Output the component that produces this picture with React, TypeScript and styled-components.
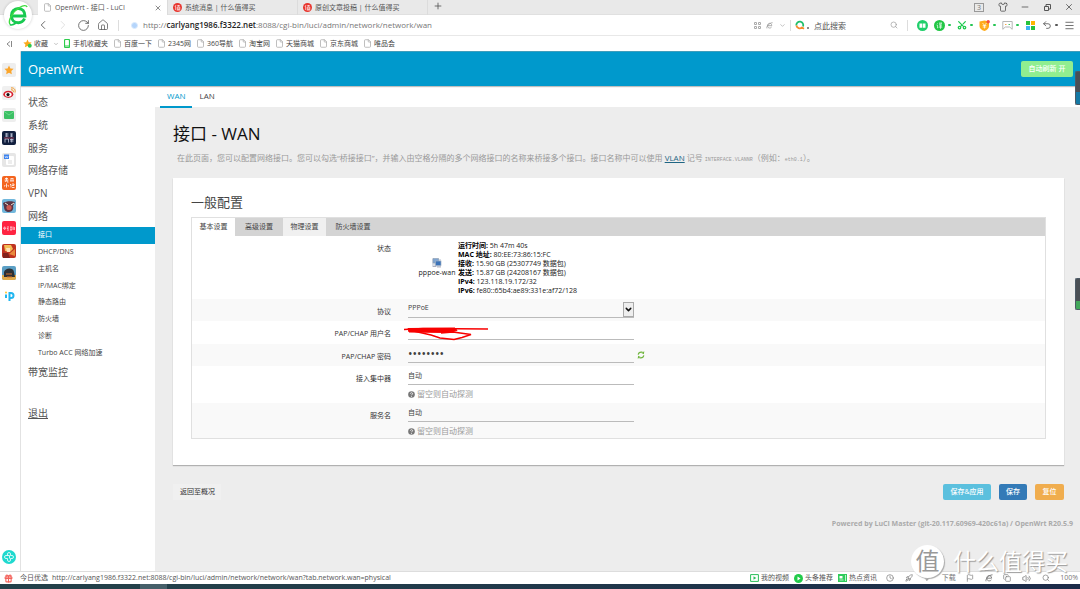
import React from 'react';
import styled, { createGlobalStyle } from 'styled-components';
import {
  ArrowDown, ChevronDown, ChevronLeft, ChevronRight, Clock, Copy, File, Flag, Gift, Home, Menu, Minus,
  Plus, Rocket, RotateCw, Scissors, Search, Shirt, Undo2, Volume2, X,
} from 'lucide-react';

const latin = '"Open Sans", "Noto Sans"';
const cjk = '"Noto Sans CJK SC", sans-serif';

const GlobalStyle = createGlobalStyle`
  * { box-sizing: border-box; }
  body {
    margin: 0;
    background: #ededed;
    color: #404040;
    font-family: ${latin}, ${cjk};
    font-size: 7px;
    line-height: 10px;
    overflow: hidden;
  }
  button, input, select { font: inherit; color: inherit; margin: 0; padding: 0; border: 0; background: none; border-radius: 0; outline: 0; }
  svg { display: block; flex: none; }
  a { color: inherit; text-decoration: none; }
`;

const Page = styled.div`
  position: relative;
  display: flex;
  flex-direction: column;
  min-height: 100vh;
`;

/* ---------- browser chrome ---------- */

const TabStrip = styled.div`
  display: flex;
  height: 15px;
  padding-left: 38px;
  background: #e9e9e9;
  border-bottom: 1px solid #e0e0e0;
`;

const BrowserTab = styled.div<{ $active?: boolean }>`
  display: flex;
  align-items: center;
  gap: 3px;
  flex: 0 0 130px;
  height: 15px;
  padding: 0 5px;
  color: #555;
  background: ${p => (p.$active ? '#fff' : 'transparent')};
  border-right: 1px solid #dcdcdc;
  white-space: nowrap;
`;

const IconButton = styled.button<{ $color?: string; $w?: number }>`
  display: flex;
  align-items: center;
  justify-content: center;
  flex: none;
  width: ${p => p.$w ?? 20}px;
  height: 12px;
  color: ${p => p.$color ?? '#555'};
`;

const Push = styled.div`
  margin-left: auto;
  display: flex;
  align-items: center;
`;

const CountBadge = styled.span`
  width: 10px;
  height: 9px;
  margin-right: 8px;
  border: 1px solid #999;
  color: #777;
  font-size: 7px;
  line-height: 7px;
  text-align: center;
`;

const Toolbar = styled.div`
  display: flex;
  align-items: center;
  height: 21px;
  background: #fff;
  border-bottom: 1px solid #e8e8e8;
`;

const NavButtons = styled.div`
  display: flex;
  padding: 0 5px 0 33px;
`;

const Divider = styled.span`
  width: 1px;
  height: 11px;
  background: #ddd;
`;

const SiteDot = styled.span`
  width: 7px;
  height: 7px;
  margin: 0 5px 0 12px;
  border-radius: 50%;
  background: #b5d5fb;
  border: 1px solid #dcebfd;
`;

const Address = styled.div`
  flex: 1;
  color: #777;
  font-size: 8px;
  white-space: nowrap;
  b { color: #222; font-weight: 600; }
`;

const SearchBox = styled.label`
  display: flex;
  align-items: center;
  width: 116px;
  padding: 0 9px 0 4px;
  gap: 4px;
  color: #999;
  input { flex: 1; min-width: 0; font-size: 8px; height: 12px; color: #555; }
  input::placeholder { color: #555; opacity: 1; }
`;

const ToolIcons = styled.div`
  display: flex;
  align-items: center;
  justify-content: space-between;
  width: 172px;
  padding: 0 5px 0 9px;
`;

const ToolButton = styled.button<{ $color?: string }>`
  display: flex;
  align-items: center;
  gap: 3px;
  height: 12px;
  color: ${p => p.$color ?? '#555'};
`;

const Tick = styled.span`
  width: 3px;
  height: 2px;
  border-radius: 1px;
  background: currentColor;
`;

const Bookmarks = styled.nav`
  display: flex;
  align-items: center;
  gap: 5px;
  height: 15px;
  padding-left: 6px;
  background: #fff;
  color: #444;
`;

const Bookmark = styled.a<{ $gap?: number }>`
  display: flex;
  align-items: center;
  gap: ${p => p.$gap ?? 3}px;
  white-space: nowrap;
`;

const LogoBubble = styled.div`
  position: absolute;
  left: 4px;
  top: 1px;
  width: 28px;
  height: 28px;
  border-radius: 50%;
  background: #fff;
  box-shadow: 0 0 3px rgba(0, 0, 0, 0.2);
`;

/* ---------- window body ---------- */

const Window = styled.div`
  display: flex;
  flex: 1;
`;

const AppRail = styled.aside`
  display: flex;
  flex-direction: column;
  justify-content: space-between;
  align-items: center;
  flex: 0 0 21px;
  padding: 12px 2px 7px 0;
  background: #fff;
  border-right: 1px solid #e2e2e2;
`;

const RailList = styled.div`
  display: flex;
  flex-direction: column;
  justify-content: space-between;
  height: 240px;
`;

const RouterPage = styled.div`
  flex: 1;
  min-width: 0;
  display: flex;
  flex-direction: column;
`;

const Header = styled.header`
  display: flex;
  align-items: center;
  justify-content: space-between;
  height: 35px;
  padding: 0 7px;
  background: #0099cc;
  border-top: 1px solid #3f9dbb;
  box-shadow: 0 1px 1px rgba(0, 0, 0, 0.25);
  z-index: 1;
`;

const Brand = styled.a`
  color: #fff;
  font-size: 13px;
  line-height: 18px;
  padding-bottom: 1px;
`;

const ActionButton = styled.button<{ $bg: string; $w: number }>`
  width: ${p => p.$w}px;
  height: 16px;
  border-radius: 2px;
  background: ${p => p.$bg};
  color: #fff;
  font-weight: 500;
  line-height: 16px;
  text-align: center;
  white-space: nowrap;
`;

const Columns = styled.div`
  display: flex;
  flex: 1;
`;

const SideMenu = styled.nav`
  flex: 0 0 134px;
  padding-top: 5px;
  background: #fff;
`;

const MenuGroup = styled.div`
  display: grid;
  grid-template-rows: repeat(6, 1fr);
  height: 136px;
`;

const SubMenu = styled.div`
  display: grid;
  grid-template-rows: repeat(8, 1fr);
  height: 134px;
`;

const MenuLink = styled.a<{ $underline?: boolean }>`
  display: flex;
  align-items: center;
  min-height: 22px;
  padding-left: 7px;
  color: #555;
  font-size: 10px;
  line-height: 14px;
  margin-top: ${p => (p.$underline ? 19 : 0)}px;
  text-decoration: ${p => (p.$underline ? 'underline' : 'none')};
`;

const SubLink = styled.a<{ $active?: boolean }>`
  display: flex;
  align-items: center;
  padding-left: 17px;
  color: ${p => (p.$active ? '#fff' : '#444')};
  background: ${p => (p.$active ? '#0099cc' : 'transparent')};
`;

const Main = styled.main`
  flex: 1;
  min-width: 0;
`;

const PageTabs = styled.nav`
  display: flex;
  height: 22px;
  padding-left: 5px;
  background: linear-gradient(#fff 21px, #ededed 21px);
`;

const PageTab = styled.a<{ $active?: boolean }>`
  padding: 0 7px;
  font-size: 8px;
  line-height: 20px;
  color: ${p => (p.$active ? '#0099cc' : '#444')};
  border-bottom: 2px solid ${p => (p.$active ? '#0099cc' : 'transparent')};
`;

const Content = styled.div`
  padding: 15px 16px 0 18px;
`;

const Title = styled.h1`
  margin: 0;
  color: #111;
  font-size: 17px;
  font-weight: 400;
  line-height: 22px;
`;

const Description = styled.p`
  margin: 8px 0 0 4px;
  color: #999;
  font-size: 8px;
  line-height: 10px;
  white-space: nowrap;
  a { color: #1f6583; text-decoration: underline; }
  code { font-family: "Liberation Mono", monospace; font-size: 5px; }
`;

const Card = styled.section`
  margin-top: 13px;
  padding: 14px 18px 26px;
  background: #fff;
  box-shadow: 0 1px 1px rgba(0, 0, 0, 0.25);
`;

const CardTitle = styled.h2`
  margin: 0 0 5px;
  font-size: 13px;
  font-weight: 400;
  line-height: 20px;
  color: #444;
`;

const ConfigBox = styled.form`
  border: 1px solid #e0e0e0;
`;

const ConfigTabs = styled.div`
  display: flex;
  height: 18px;
  background: #d4d4d4;
`;

const ConfigTab = styled.button<{ $w: number; $bg?: string }>`
  width: ${p => p.$w}px;
  background: ${p => p.$bg ?? 'transparent'};
  color: #444;
`;

const Row = styled.div<{ $h: number; $shade?: boolean }>`
  display: grid;
  grid-template-columns: 199px 226px 1fr;
  column-gap: 17px;
  height: ${p => p.$h}px;
  background: ${p => (p.$shade ? '#f9f9f9' : '#fff')};
`;

const FieldLabel = styled.label`
  padding-top: 8px;
  text-align: right;
  color: #333;
`;

const Field = styled.div`
  position: relative;
`;

const TextInput = styled.input<{ $size?: number }>`
  display: block;
  width: 100%;
  height: 19px;
  border-bottom: 1px solid #bbb;
  font-size: ${p => p.$size ?? 7}px;
`;

const Select = styled.select`
  display: block;
  width: 100%;
  height: 19px;
  border-bottom: 1px solid #bbb;
  appearance: none;
`;

const SelectArrow = styled.span`
  position: absolute;
  right: 0;
  top: 3px;
  display: flex;
  align-items: center;
  justify-content: center;
  width: 11px;
  height: 15px;
  border: 1px solid #aaa;
  background: #eee;
  color: #111;
  pointer-events: none;
`;

const Hint = styled.div`
  display: flex;
  align-items: center;
  gap: 2px;
  margin-top: 4px;
  color: #999;
  font-size: 8px;
`;

const StatusBlock = styled.div`
  display: flex;
  align-items: center;
  gap: 3px;
  padding-left: 11px;
  color: #222;
  white-space: nowrap;
`;

const Iface = styled.div`
  display: flex;
  flex-direction: column;
  align-items: center;
  width: 36px;
`;

const StatusLines = styled.div`
  line-height: 9px;
  b { color: #000; }
`;

const RefreshCell = styled.button`
  display: flex;
  align-items: center;
  margin-left: -14px;
`;

const Actions = styled.div`
  display: flex;
  gap: 8px;
  margin-top: 19px;
`;

const BackButton = styled.button`
  margin-right: auto;
  padding: 0 6px 0 7px;
  height: 16px;
  background: #f0f0f0;
  color: #333;
`;

const Powered = styled.footer`
  margin-top: 19px;
  padding-right: 7px;
  color: #aaa;
  font-weight: 700;
  text-align: right;
`;

/* ---------- status bar, overlays ---------- */

const StatusBar = styled.div`
  display: flex;
  align-items: center;
  height: 13px;
  padding: 0 2px 0 4px;
  background: #fff;
  border-top: 1px solid #ddd;
  color: #555;
  white-space: nowrap;
`;

const StatusText = styled.span`
  margin-left: 7px;
  & + & { margin-left: 4px; }
`;

const StatusLink = styled.a`
  display: flex;
  align-items: center;
  gap: 2px;
  margin-right: 5px;
`;

const StatusIcons = styled.div`
  display: flex;
  align-items: center;
  justify-content: space-between;
  width: 192px;
  margin-left: 4px;
  color: #777;
`;

const Taskbar = styled.div`
  height: 5px;
  background: linear-gradient(90deg, #23404a 0 140px, #465f69 140px 167px, #23404a 167px, #1c2b49);
`;

const EdgeHandle = styled.div<{ $top: number; $h: number; $fill: string; $tip: number }>`
  position: absolute;
  right: 0;
  top: ${p => p.$top}px;
  width: 5px;
  height: ${p => p.$h}px;
  border: 1px solid #4d5a66;
  border-right: 0;
  border-radius: 2px 0 0 2px;
  background: linear-gradient(#4a4f55 ${p => p.$h - p.$tip}px, ${p => p.$fill} 0);
  z-index: 2;
`;

const Watermark = styled.div`
  position: absolute;
  right: 12px;
  bottom: 11px;
  display: flex;
  align-items: center;
  gap: 9px;
  color: #fff;
  font-size: 23px;
  line-height: 34px;
  text-shadow: 1px 1px 1px #999;
  pointer-events: none;
`;

const Seal = styled.span`
  width: 33px;
  height: 33px;
  border-radius: 50%;
  background: #fff;
  color: #999;
  font-size: 24px;
  line-height: 32px;
  text-align: center;
  text-shadow: none;
  box-shadow: 1px 1px 1px #aaa;
`;

/* ---------- drawings ---------- */

const ELogo = () => (
  <svg width="28" height="28" viewBox="0 0 28 28" fill="none">
    <path d="M20.5 17.500c-1 2.500-3.400 4.200-6.300 4.200-4 0-6.800-2.900-6.800-7s2.900-7.200 7-7.200c3.900 0 6.500 2.900 6.500 7.500H9" stroke="#17c950" strokeWidth="3" />
    <path d="M6 23.500C3.800 20 8 11 15.500 6.500c4-2.400 7-2.500 7.600-.5" stroke="#3fdc3f" strokeWidth="1.400" />
    <path d="M6 23.500c1.400 1 4-.1 6-1.500" stroke="#17c950" strokeWidth="1.600" />
  </svg>
);

const SmzdmIcon = () => (
  <svg width="9" height="9" viewBox="0 0 9 9">
    <circle cx="4.500" cy="4.500" r="4.500" fill="#e8352e" />
    <path d="M3 2 2 4M2.600 3.500V7M4 2.700h3M5.500 2v1.500M4.200 4h2.600v2.500H4.200zM4.200 5.200h2.600M3.700 7.100h3.600" stroke="#fff" strokeWidth=".6" fill="none" />
  </svg>
);

const FileIcon = () => <File size={9} color="#aaa" strokeWidth={2} />;

const StarIcon = ({ dot }: { dot?: boolean }) => (
  <svg width="9" height="9" viewBox="0 0 10 10">
    <path d="M5 .6 6.400 3.500l3.200.4-2.300 2.200.6 3.200L5 7.700 2.100 9.300l.6-3.200L.4 3.900l3.200-.4z" fill="#fba919" />
    {dot && <circle cx="7.500" cy="7.600" r="2.200" fill="#2fc84f" />}
  </svg>
);

const railIcons: React.ReactNode[] = [
  <g key="star"><rect width="14" height="14" rx="2" fill="#eee" /><path d="M7 2.500 8.400 5.400l3.200.4-2.300 2.200.5 3.200L7 9.700l-2.800 1.500.5-3.200-2.300-2.200 3.200-.4z" fill="#fba52a" /></g>,
  <g key="weibo"><rect width="14" height="14" rx="2" fill="#f0f0f0" /><ellipse cx="6.300" cy="8.300" rx="5" ry="3.600" fill="#d8232f" /><ellipse cx="6.300" cy="8.500" rx="3.300" ry="2.200" fill="#fff" /><circle cx="6" cy="8.600" r="1.600" fill="#111" /><path d="M9 3.800c1.700-.3 2.700.8 2.300 2.400M9 1.900c3-.4 4.800 1.800 4 4.600" stroke="#f29a2b" fill="none" /></g>,
  <g key="mail"><rect width="14" height="14" rx="2" fill="#eee" /><rect x="2" y="3" width="10" height="8" rx="1" fill="#3cc065" /><path d="m2 3.500 5 3.500 5-3.500" stroke="#7fe09b" strokeWidth=".7" fill="none" /></g>,
  <g key="game"><rect width="14" height="14" rx="2" fill="#12203f" /><path d="M3 3h3.500M3 5h3.500M4.700 2v4M8 3h3M8 5h3M9.500 2.500V6M3 8v3.500M3 8h3.500v3.500M8 8.500h3.500M8 10h3.500M9.700 7.500v4" stroke="#c3c8dc" strokeWidth=".8" fill="none" /><path d="M2 7h10" stroke="#d2455c" strokeWidth=".7" /></g>,
  <g key="doc"><rect width="14" height="14" rx="2" fill="#e6e6e6" /><rect x="4" y="3" width="8" height="9" rx="1" fill="#fff" /><path d="M6 8h4M6 10h4" stroke="#ccc" strokeWidth=".7" /><rect x="2" y="1.500" width="5" height="4.500" fill="#3d83ee" /><path d="m3 3 .7 2 .8-1.600.8 1.600L6 3" stroke="#fff" strokeWidth=".5" fill="none" /></g>,
  <g key="novel"><rect width="14" height="14" rx="2" fill="#f4641e" /><path d="M3 2.500h3M2.500 4h4M4.500 1.500V4L3 6M5 4v2h1.500M8.500 2.500h3M8 4h4M9 4v2M11 4v2M4.500 7.500v4M3 9 2.500 10.500M6 9l.5 1.500M8 8.500h1v3M10 8h2v1.500h-2M10 11.500h2.500" stroke="#fff" strokeWidth=".8" fill="none" /></g>,
  <g key="pirate"><rect width="14" height="14" rx="2" fill="#71b7dc" /><path d="M1 4c3-2 9-2 12-1L11 7c1 3-1 6-4 6s-5-2-5-5z" fill="#5b3444" /><circle cx="7" cy="8.500" r="2.600" fill="#cf5850" /><path d="m3 4 3 2M12 4 9 6" stroke="#efe6d8" /></g>,
  <g key="red"><rect width="14" height="14" rx="2" fill="#ff2442" /><path d="M2.700 5.500V9M1.700 6.500v1.500M3.700 6.500v1.500M5 6h2M5 7.500h1.500M5 9h2M8 6h2M9 6v3M8 9h2M11 5.500V9M12.300 6v3" stroke="#fff" strokeWidth=".7" /></g>,
  <g key="king"><rect width="14" height="14" rx="2" fill="#bf3320" /><path d="M2 1h7l2 4-3 3-5-1z" fill="#f3bd55" /><path d="M4 4h4v4H5z" fill="#ffe1b5" /><path d="m7 10 6-5v7z" fill="#e98a3d" /><path d="M1 9h5l2 5H1z" fill="#80221b" /></g>,
  <g key="tank"><rect width="14" height="14" rx="2" fill="#5b9fc5" /><path d="M0 9h14v3a2 2 0 0 1-2 2H2a2 2 0 0 1-2-2z" fill="#dfaa4a" /><path d="M2 6c1-4 9-5 10 0l1 5H2z" fill="#2c3034" /><path d="M4 8h6M5 11h5" stroke="#d26e2e" /></g>,
  <g key="pp"><path d="M4 5.500V9" stroke="#21b6f0" strokeWidth="2" /><circle cx="4" cy="3.500" r="1" fill="#ffc52e" /><path d="M7.500 12V4H9a2.500 2.500 0 0 1 0 5H7.500" stroke="#21b6f0" strokeWidth="2" fill="none" /></g>,
];

const OrbIcon = () => (
  <svg width="14" height="14" viewBox="0 0 14 14">
    <circle cx="7" cy="7" r="7" fill="#1fd9cf" />
    <path d="M5.500 5.500V4a1.500 1.500 0 0 1 3 0v1.500H10a1.500 1.500 0 0 1 0 3H8.500V10a1.500 1.500 0 0 1-3 0V8.500H4a1.500 1.500 0 0 1 0-3h3.500v3" stroke="#fff" strokeWidth=".8" fill="none" />
  </svg>
);

const IfaceIcon = () => (
  <svg width="10" height="10" viewBox="0 0 10 10">
    <path d="M0 1h9v8H0z" fill="#d9dee6" />
    <rect x="1" y=".5" width="5.500" height="4.500" fill="#7fa5d2" stroke="#8b9bb0" strokeWidth=".6" />
    <rect x="3.500" y="3" width="5.500" height="4.500" fill="#3c73b8" stroke="#9fb0c4" strokeWidth=".7" />
    <path d="M1 8.500h3M5 9h4" stroke="#99a" strokeWidth=".7" />
  </svg>
);

const ReloadIcon = () => (
  <svg width="8" height="8" viewBox="0 0 8 8" fill="none" stroke="#72b640" strokeWidth="1.200">
    <path d="M1.200 3.600C1.500 2 2.800 1.200 4.200 1.200h1.300M6.800 4.400C6.500 6 5.200 6.800 3.800 6.800H2.500" />
    <path d="M7.300.2 6.900 3.300 4.300 2.100zM.7 7.800l.4-3.100 2.600 1.200z" fill="#72b640" stroke="none" />
  </svg>
);

const HelpIcon = () => (
  <svg width="7" height="7" viewBox="0 0 7 7">
    <circle cx="3.500" cy="3.500" r="3.300" fill="#777" />
    <path d="M2.400 2.700c.1-1.400 2.300-1.300 2.200 0 0 .8-1.100.8-1.100 1.600M3.500 5v.8" stroke="#fff" strokeWidth=".8" fill="none" />
  </svg>
);

const IeIcon = ({ size = 7 }: { size?: number }) => (
  <svg width={size} height={size} viewBox="0 0 8 8" fill="none" stroke="currentColor" strokeWidth=".9">
    <path d="M1.700 4.200h4.900C6.600 2.500 5.500 1.500 4.200 1.500S1.700 2.600 1.700 4.200s1.100 2.700 2.500 2.700c1 0 1.700-.4 2.200-1.100M1 7.300C.2 5.500 3.500 1 7.500.8" />
  </svg>
);

const RestoreIcon = () => (
  <svg width="7" height="7" viewBox="0 0 7 7" fill="none" stroke="currentColor"><path d="M.5 2.500h4v4h-4zM2 2V.5h4.500V5H5" /></svg>
);

const tools: { color?: string; tick?: boolean; art: React.ReactNode }[] = [
  { art: <g><circle cx="5.500" cy="5.500" r="5.500" fill="#20cf6b" /><path d="M2.500 3.500h2.700v4.300H2.500zM5.800 3.500h2.700v4.300H5.800z" fill="#fff" /></g> },
  { color: '#23c552', tick: true, art: <g><circle cx="5.500" cy="5.500" r="5.500" fill="#22c746" /><path d="M3 3l.6.7M2.500 5h1v3l.8-.6M5 3h3L5 5M5.300 3.500 8 5.200M5 6h3M4.800 7.200h3.500M6.500 5v4" stroke="#fff" strokeWidth=".6" fill="none" /></g> },
  { color: '#23c552', tick: true, art: <Scissors size={10} color="#1fcb50" strokeWidth={3} style={{ transform: 'rotate(-90deg)' }} /> },
  { color: '#23c552', tick: true, art: <g><path d="M.5 1.500 5.500.5l4.500 1v4.500c0 2.500-2 4-4.500 5-3-1-5-2.500-5-5z" fill="#ffab19" /><path d="M3.500 3l2 2.300 2-2.300M5.500 5.300V8.500M3.700 5.500h3.600M3.700 7h3.600" stroke="#fff" strokeWidth=".7" fill="none" /><circle cx="9.200" cy="1.800" r="1.700" fill="#f5503e" /></g> },
  { color: '#23c552', tick: true, art: <g fill="none" stroke="#b5b5b5"><path d="M.8 1.500h9.400v7.800L7.700 7H3.300L.8 9.300z" /><path d="M3 4.500h1.500" stroke="#f7a84c" /><path d="M6.500 4.500H8" stroke="#43c66a" /></g> },
  { art: <g><path d="M1 1h4v4H1z" fill="#27c23c" /><path d="M6 1h4v4H6z" fill="#ffb400" /><path d="M1 6h4v4H1z" fill="#3db4f2" /><path d="M6 6h4v4H6z" fill="#27c23c" /></g> },
];

/* ---------- data ---------- */

const bookmarks = ['百度一下', '2345网', '360导航', '淘宝网', '天猫商城', '京东商城', '唯品会'];
const menu = ['状态', '系统', '服务', '网络存储', 'VPN', '网络'];
const subMenu = ['接口', 'DHCP/DNS', '主机名', 'IP/MAC绑定', '静态路由', '防火墙', '诊断', 'Turbo ACC 网络加速'];
const status = [
  ['运行时间', '5h 47m 40s'],
  ['MAC 地址', '80:EE:73:86:15:FC'],
  ['接收', '15.90 GB (25307749 数据包)'],
  ['发送', '15.87 GB (24208167 数据包)'],
  ['IPv4', '123.118.19.172/32'],
  ['IPv6', 'fe80::65b4:ae89:331e:af72/128'],
];

const Scribble = styled.svg`
  position: absolute;
  left: -5px;
  top: 6px;
`;

export default function App() {
  return (
    <Page>
      <GlobalStyle />
      <TabStrip>
        <BrowserTab $active>
          <FileIcon />OpenWrt - 接口 - LuCI
          <Push><X size={8} /></Push>
        </BrowserTab>
        <BrowserTab><SmzdmIcon />系统消息 | 什么值得买</BrowserTab>
        <BrowserTab><SmzdmIcon />原创文章投稿 | 什么值得买</BrowserTab>
        <IconButton aria-label="新标签"><Plus size={10} /></IconButton>
        <Push>
          <CountBadge>3</CountBadge>
          <IconButton $w={22} aria-label="皮肤"><Shirt size={10} /></IconButton>
          <IconButton $w={22} aria-label="最小化"><Minus size={10} /></IconButton>
          <IconButton $w={22} aria-label="还原"><RestoreIcon /></IconButton>
          <IconButton $w={22} aria-label="关闭"><X size={10} /></IconButton>
        </Push>
      </TabStrip>
      <Toolbar>
        <NavButtons>
          <IconButton aria-label="后退"><ChevronLeft size={14} strokeWidth={1.500} /></IconButton>
          <IconButton $color="#ddd" aria-label="前进"><ChevronRight size={14} strokeWidth={1.500} /></IconButton>
          <IconButton aria-label="刷新"><RotateCw size={13} strokeWidth={1.500} /></IconButton>
          <IconButton aria-label="主页"><Home size={12} strokeWidth={1.500} /></IconButton>
        </NavButtons>
        <Divider />
        <SiteDot />
        <Address>http://<b>carlyang1986.f3322.net</b>:8088/cgi-bin/luci/admin/network/network/wan</Address>
        <IconButton $w={12} $color="#aaa" aria-label="二维码">
          <svg width="7" height="7" viewBox="0 0 7 7" fill="none" stroke="currentColor"><path d="M.5.500h2v2h-2zM4.500.500h2v2h-2zM.5 4.500h2v2h-2zM4.500 4.500h2v2h-2z" /></svg>
        </IconButton>
        <IconButton $w={12} $color="#999" aria-label="内核"><IeIcon /></IconButton>
        <IconButton $w={15} $color="#999" aria-label="更多"><ChevronDown size={7} /></IconButton>
        <Divider />
        <SearchBox>
          <svg width="15" height="10" viewBox="0 0 15 10" fill="none" strokeWidth="1.800">
            <path d="M1.300 5.500A3.500 3.500 0 1 1 8 6.500" stroke="#20bf6b" /><path d="M1.400 5.500A3.500 3.500 0 0 0 7 7.500l2 1.300" stroke="#f68b2c" /><path d="M12 8h2" stroke="#666" strokeWidth="1.500" />
          </svg>
          <input aria-label="搜索" placeholder="点此搜索" />
          <Search size={8} />
        </SearchBox>
        <Divider />
        <ToolIcons>
          {tools.map((t, i) => (
            <ToolButton key={i} $color={t.color} aria-label={`工具 ${i + 1}`}>
              {i === 2 ? t.art : <svg width="11" height="11" viewBox="0 0 11 11">{t.art}</svg>}
              {t.tick && <Tick />}
            </ToolButton>
          ))}
          <ToolButton aria-label="撤销"><Undo2 size={10} /><Tick /></ToolButton>
          <ToolButton aria-label="菜单"><Menu size={11} strokeWidth={1.800} /></ToolButton>
        </ToolIcons>
      </Toolbar>
      <Bookmarks>
        <svg width="12" height="8" viewBox="0 0 12 8" fill="none" stroke="#888"><path d="M4 1.500 1 4l3 2.500M5.500 1v6" /></svg>
        <Bookmark href="#" $gap={2}><StarIcon dot />收藏</Bookmark>
        <ChevronDown size={6} color="#888" />
        <Bookmark href="#" $gap={3}>
          <svg width="6" height="9" viewBox="0 0 6 9" fill="none" stroke="#2dcc4c"><rect x=".5" y=".5" width="5" height="8" rx="1" strokeWidth="1.200" /><path d="M1 7h4" /></svg>
          手机收藏夹
        </Bookmark>
        {bookmarks.map(b => <Bookmark key={b} href="#" $gap={2}><FileIcon />{b}</Bookmark>)}
      </Bookmarks>
      <LogoBubble><ELogo /></LogoBubble>

      <Window>
        <AppRail>
          <RailList>
            {railIcons.map((art, i) => <svg key={i} width="14" height="14" viewBox="0 0 14 14">{art}</svg>)}
          </RailList>
          <OrbIcon />
        </AppRail>
        <RouterPage>
          <Header>
            <Brand href="#">OpenWrt</Brand>
            <ActionButton $bg="#90ee90" $w={52}>自动刷新 开</ActionButton>
          </Header>
          <Columns>
            <SideMenu>
              <MenuGroup>{menu.map(m => <MenuLink key={m} href="#">{m}</MenuLink>)}</MenuGroup>
              <SubMenu>{subMenu.map((m, i) => <SubLink key={m} href="#" $active={i === 0}>{m}</SubLink>)}</SubMenu>
              <MenuLink href="#">带宽监控</MenuLink>
              <MenuLink href="#" $underline>退出</MenuLink>
            </SideMenu>
            <Main>
              <PageTabs>
                <PageTab href="#" $active>WAN</PageTab>
                <PageTab href="#">LAN</PageTab>
              </PageTabs>
              <Content>
                <Title>接口 - WAN</Title>
                <Description>
                  在此页面，您可以配置网络接口。您可以勾选“桥接接口”，并输入由空格分隔的多个网络接口的名称来桥接多个接口。接口名称中可以使用 <a href="#">VLAN</a> 记号 <code>INTERFACE.VLANNR</code>（例如：<code>eth0.1</code>）。
                </Description>
                <Card>
                  <CardTitle>一般配置</CardTitle>
                  <ConfigBox onSubmit={e => e.preventDefault()}>
                    <ConfigTabs>
                      <ConfigTab type="button" $w={43} $bg="#fff">基本设置</ConfigTab>
                      <ConfigTab type="button" $w={48}>高级设置</ConfigTab>
                      <ConfigTab type="button" $w={43} $bg="#f0f0f0">物理设置</ConfigTab>
                      <ConfigTab type="button" $w={54}>防火墙设置</ConfigTab>
                    </ConfigTabs>
                    <Row $h={63}>
                      <FieldLabel as="span">状态</FieldLabel>
                      <StatusBlock>
                        <Iface><IfaceIcon />pppoe-wan</Iface>
                        <StatusLines>
                          {status.map(([k, v]) => <div key={k}><b>{k}:</b> {v}</div>)}
                        </StatusLines>
                      </StatusBlock>
                    </Row>
                    <Row $h={22} $shade>
                      <FieldLabel htmlFor="proto">协议</FieldLabel>
                      <Field>
                        <Select id="proto" defaultValue="PPPoE"><option>PPPoE</option></Select>
                        <SelectArrow><ChevronDown size={9} strokeWidth={4} /></SelectArrow>
                      </Field>
                    </Row>
                    <Row $h={23}>
                      <FieldLabel htmlFor="user">PAP/CHAP 用户名</FieldLabel>
                      <Field>
                        <TextInput id="user" />
                        <Scribble width="86" height="14" viewBox="0 0 86 14" fill="none" stroke="#f80000">
                          <path d="M1 2.500 20 1.500l65 .5M6 3l22 5 9 3 14 1.500 8-2 9-3-18-2.500-12 1" strokeWidth="1.400" />
                          <path d="M5 1.500 52 1l2 2.500-8 2-40-.5z" fill="#f80000" />
                        </Scribble>
                      </Field>
                    </Row>
                    <Row $h={22} $shade>
                      <FieldLabel htmlFor="pass">PAP/CHAP 密码</FieldLabel>
                      <Field><TextInput id="pass" type="password" defaultValue="password" $size={12} /></Field>
                      <RefreshCell type="button" aria-label="显示密码"><ReloadIcon /></RefreshCell>
                    </Row>
                    <Row $h={37}>
                      <FieldLabel htmlFor="ac">接入集中器</FieldLabel>
                      <Field>
                        <TextInput id="ac" defaultValue="自动" />
                        <Hint><HelpIcon />留空则自动探测</Hint>
                      </Field>
                    </Row>
                    <Row $h={35} $shade>
                      <FieldLabel htmlFor="service">服务名</FieldLabel>
                      <Field>
                        <TextInput id="service" defaultValue="自动" />
                        <Hint><HelpIcon />留空则自动探测</Hint>
                      </Field>
                    </Row>
                  </ConfigBox>
                </Card>
                <Actions>
                  <BackButton>返回至概况</BackButton>
                  <ActionButton $bg="#5bc0de" $w={48}>保存&amp;应用</ActionButton>
                  <ActionButton $bg="#337ab7" $w={28}>保存</ActionButton>
                  <ActionButton $bg="#f0ad4e" $w={29}>复位</ActionButton>
                </Actions>
              </Content>
              <Powered>Powered by LuCI Master (git-20.117.60969-420c61a) / OpenWrt R20.5.9</Powered>
            </Main>
          </Columns>
        </RouterPage>
      </Window>

      <StatusBar>
        <Gift size={9} color="#f3635c" strokeWidth={3} />
        <StatusText>今日优选</StatusText>
        <StatusText>http://carlyang1986.f3322.net:8088/cgi-bin/luci/admin/network/network/wan?tab.network.wan=physical</StatusText>
        <Push>
          <StatusLink href="#"><svg width="9" height="8" viewBox="0 0 9 8"><path d="M.6.600h7.800v6.800H.6z" fill="none" stroke="#2bbd5a" /><path d="M3.500 2.200v3.600L6.300 4z" fill="#2bbd5a" /></svg>我的视频</StatusLink>
          <StatusLink href="#"><svg width="9" height="9" viewBox="0 0 9 9"><circle cx="4.500" cy="4.500" r="4.500" fill="#22cb4a" /><path d="M3.500 2.500v4l3-2z" fill="#fff" /></svg>头条推荐</StatusLink>
          <StatusLink href="#"><svg width="9" height="8" viewBox="0 0 9 8"><path d="M0 0h9v8H0z" fill="#2fcc5b" /><path d="M1.500 2h3v2.500h-3z" fill="#fff" /><path d="M1.500 6h4M7.500 1v6" stroke="#fff" strokeWidth=".7" /></svg>热点资讯</StatusLink>
          <StatusIcons>
            <Clock size={8} />
            <Rocket size={8} />
            <ArrowDown size={8} />
            <a href="#">下载</a>
            <Flag size={8} />
            <IeIcon size={8} />
            <Copy size={8} />
            <Volume2 size={9} />
            <Search size={8} />
            <span>100%</span>
          </StatusIcons>
        </Push>
      </StatusBar>
      <Taskbar />

      <EdgeHandle $top={71} $h={34} $fill="#1479a5" $tip={14} />
      <EdgeHandle $top={278} $h={32} $fill="#43a75b" $tip={10} />
      <Watermark><Seal>值</Seal>什么值得买</Watermark>
    </Page>
  );
}
